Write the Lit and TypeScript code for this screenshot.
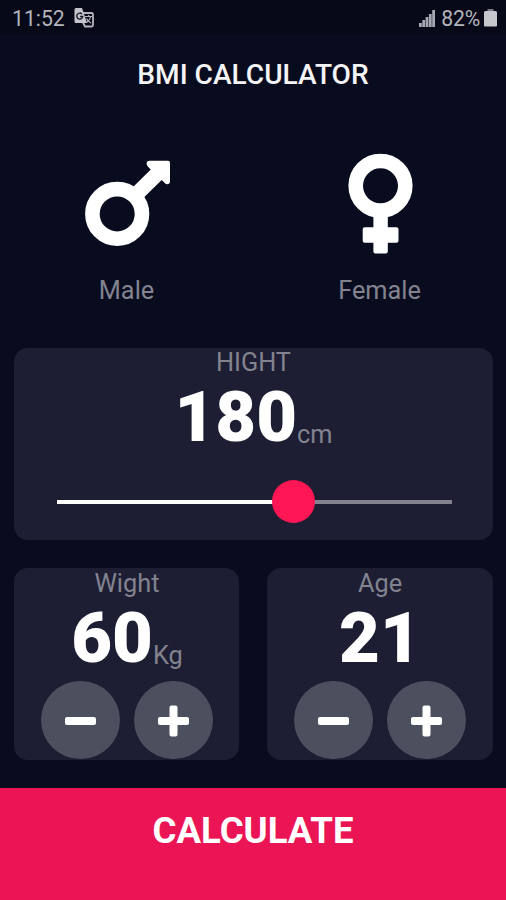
import { LitElement, html, css, svg, nothing } from "lit";
import { customElement, property, state } from "lit/decorators.js";

const minus = svg`<rect x="0" y="12" width="31" height="8" rx="2"/>`;
const plus = svg`<path d="M13.500 0.500h4a2 2 0 0 1 2 2v9.500H29a2 2 0 0 1 2 2v4a2 2 0 0 1-2 2h-9.500v9.500a2 2 0 0 1-2 2h-4a2 2 0 0 1-2-2V20H2a2 2 0 0 1-2-2v-4a2 2 0 0 1 2-2h9.500V2.500a2 2 0 0 1 2-2z"/>`;

@customElement("status-bar")
class StatusBar extends LitElement {
  static styles = css`
    :host { display: flex; align-items: center; justify-content: space-between; height: 34px; padding: 2px 9px 0 12px; box-sizing: border-box; background: #070918; color: #b4b5bd; font-size: 21.200px; }
    .group { display: flex; align-items: center; }
    .translate { width: 20px; height: 20px; margin: -1px 0 0 9.500px; }
    .signal { width: 16px; height: 17px; margin-right: 6px; }
    .percent { letter-spacing: -0.2px; }
    .battery { width: 13px; height: 18px; margin-left: 4px; }
  `;
  render() {
    return html`
      <div class="group">
        <span>11:52</span>
        <svg class="translate" viewBox="0 0 20 20">
          <path d="M9 5h8.500a1.500 1.500 0 0 1 1.500 1.500v10.500A1.500 1.500 0 0 1 17.500 18.500h-6.500l-2-4" fill="none" stroke="#b4b5bd" stroke-width="1.800"/>
          <path d="M2 0h6l1.200 3.500L13 15H2a1.500 1.500 0 0 1-1.500-1.500v-12A1.500 1.500 0 0 1 2 0z" fill="#c4c5cb"/>
          <path d="M8 6A3 3 0 1 0 8.800 8.500H6" fill="none" stroke="#171b2a" stroke-width="1.400"/>
          <path d="M11 8.500h7M14.500 7v1.500M16.700 8.500c-.5 2.500-2 4.500-4 6M12.500 10.500c1 2 2.500 3.300 4.500 4.500" fill="none" stroke="#b4b5bd" stroke-width="1.200"/>
        </svg>
      </div>
      <div class="group">
        <svg class="signal" viewBox="0 0 16 17" fill="#a5a7b1">
          <rect x="0" y="13" width="2.800" height="4"/><rect x="3.300" y="10" width="2.800" height="7"/><rect x="6.600" y="7" width="2.800" height="10"/><rect x="9.900" y="4" width="2.800" height="13"/><rect x="13.200" y="0" width="2.800" height="17"/>
        </svg>
        <span class="percent">82%</span>
        <svg class="battery" viewBox="0 0 13 18">
          <path d="M3.500 0h6v2.500h-6z" fill="#777984"/><path d="M1.500 2h10A1.500 1.500 0 0 1 13 3.500V16.500a1 1 0 0 1-1 1H1a1 1 0 0 1-1-1V3.500A1.500 1.500 0 0 1 1.500 2z" fill="#c6c7cd"/>
        </svg>
      </div>`;
  }
}

@customElement("gender-option")
class GenderOption extends LitElement {
  @property() kind = "male";
  @property() label = "";
  static styles = css`
    :host { display: flex; flex-direction: column; align-items: center; flex: 1; padding-top: 32px; }
    .icon { width: 100px; height: 101px; margin-bottom: 22px; }
    .label { font-size: 25.3px; line-height: 30px; color: #82838f; }
  `;
  render() {
    return html`
      <svg class="icon" viewBox="0 0 100 101" fill="#fff">
        ${this.kind === "male"
          ? svg`<circle cx="40.200" cy="60.900" r="24.800" fill="none" stroke="#fff" stroke-width="14.600"/>
             <path d="M54 36 73.800 16.500 71 13.700 Q69.300 11.800 69.600 9.800 Q70 7.700 72.500 7.700 H91 Q93 7.700 93 9.700 V28.500 Q93 31 90.500 31.300 Q88.500 31.500 87.200 29.500 L84.700 27 L65 46.200z"/>`
          : svg`<circle cx="50.500" cy="32.800" r="24.800" fill="none" stroke="#fff" stroke-width="14.600"/>
             <path d="M43.400 62h14.400v12.200h8.700a2 2 0 0 1 2 2v11.500a2 2 0 0 1-2 2h-8.700v8.800a2 2 0 0 1-2 2H45.400a2 2 0 0 1-2-2v-8.800h-8.700a2 2 0 0 1-2-2v-11.500a2 2 0 0 1 2-2h8.700z"/>`}
      </svg>
      <span class="label">${this.label}</span>`;
  }
}

const cardStyles = css`
  :host { display: flex; flex-direction: column; align-items: center; box-sizing: border-box; border-radius: 14px; background: #1d1e33; height: 192px; }
  .label, .unit { font-size: 25.3px; color: #82838f; }
  .label { line-height: 30.400px; }
  .reading { display: flex; align-items: flex-start; height: 82.200px; }
  .number { font-size: 70.5px; font-weight: 900; line-height: 79.400px; color: #fff; }
  .unit { margin-top: 42px; line-height: 30px; }
`;

@customElement("height-card")
class HeightCard extends LitElement {
  @state() private value = 180;
  static styles = [cardStyles, css`
    .slider { display: flex; align-items: center; width: 395px; height: 43px; margin: 20.400px 0 0 1.500px; }
    .track { height: 3.500px; }
    .done { background: #fff; }
    .rest { flex: 1; background: #82838f; }
    .thumb { width: 43px; height: 43px; margin: 0 -21.500px; border-radius: 50%; background: #ff1654; z-index: 1; }
  `];
  render() {
    const share = ((this.value - 120) / 100) * 100;
    return html`
      <span class="label">HIGHT</span>
      <div class="reading"><span class="number">${this.value}</span><span class="unit">cm</span></div>
      <div class="slider">
        <div class="track done" style="width:${share}%"></div>
        <div class="thumb"></div>
        <div class="track rest"></div>
      </div>`;
  }
}

@customElement("counter-card")
class CounterCard extends LitElement {
  @property() label = "";
  @property() unit = "";
  @property({ type: Number }) value = 0;
  static styles = [cardStyles, css`
    :host { flex: 1; }
    .label { line-height: 31px; }
    .reading { height: 81.600px; }
    .buttons { display: flex; gap: 14.200px; }
    .round { display: flex; align-items: center; justify-content: center; width: 78.800px; height: 78.800px; padding: 0; border: 0; border-radius: 50%; background: #4c4f5e; }
    .glyph { width: 31px; height: 32px; fill: #fff; margin-top: 2px; }
  `];
  private step(by: number) {
    this.value += by;
  }
  render() {
    return html`
      <span class="label">${this.label}</span>
      <div class="reading">
        <span class="number">${this.value}</span>${this.unit ? html`<span class="unit">${this.unit}</span>` : nothing}
      </div>
      <div class="buttons">
        <button class="round" @click=${() => this.step(-1)}><svg class="glyph" viewBox="0 0 31 32">${minus}</svg></button>
        <button class="round" @click=${() => this.step(1)}><svg class="glyph" viewBox="0 0 31 32">${plus}</svg></button>
      </div>`;
  }
}

@customElement("app-root")
class AppRoot extends LitElement {
  static styles = css`
    :host { display: flex; flex-direction: column; height: 900px; overflow: hidden; background: #090c1f; color: #fff; font-family: Roboto, sans-serif; }
    .title { height: 79px; margin: 0; padding-top: 2px; box-sizing: border-box; display: flex; align-items: center; justify-content: center; font-size: 28.100px; font-weight: 500; color: #f4f4f6; }
    .genders { display: flex; height: 220.500px; padding-top: 8px; box-sizing: border-box; }
    .body { display: flex; flex-direction: column; gap: 28.500px; padding: 14px 13.500px 0 14.400px; flex: 1; }
    .pair { display: flex; gap: 28px; }
    .calculate { height: 112.500px; padding: 0 0 27px; box-sizing: border-box; border: 0; background: #eb1555; color: #fff; font: 700 36.600px Roboto, sans-serif; }
  `;
  render() {
    return html`
      <status-bar></status-bar>
      <h1 class="title">BMI CALCULATOR</h1>
      <div class="genders">
        <gender-option kind="male" label="Male"></gender-option>
        <gender-option kind="female" label="Female"></gender-option>
      </div>
      <div class="body">
        <height-card></height-card>
        <div class="pair">
          <counter-card label="Wight" unit="Kg" value="60"></counter-card>
          <counter-card label="Age" value="21"></counter-card>
        </div>
      </div>
      <button class="calculate">CALCULATE</button>`;
  }
}
